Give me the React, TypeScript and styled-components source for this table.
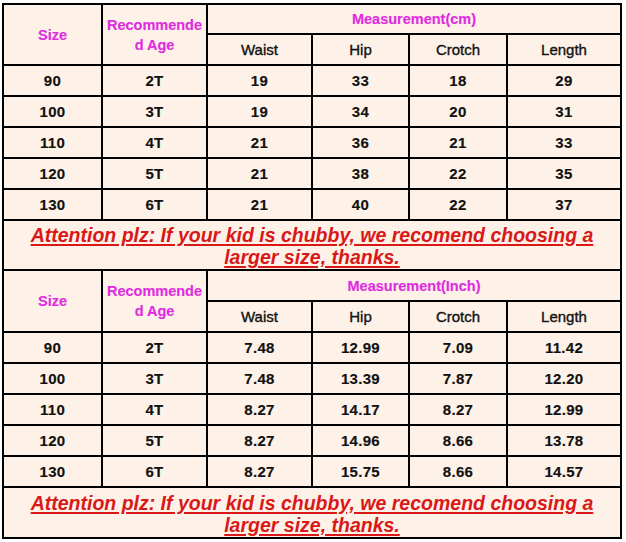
import styled, { createGlobalStyle } from 'styled-components'

const GlobalStyle = createGlobalStyle`
  html, body {
    margin: 0;
    padding: 0;
    background: #ffffff;
  }
`

const Page = styled.div`
  padding: 3px 0 0 2px;
`

// black background shows through the gaps as the cell borders
const Sheet = styled.div`
  display: grid;
  width: 620px;
  grid-template-columns: 97px 103px 103px 95px 96px 112px;
  grid-template-rows: 28px 29px repeat(5, 29px) 48px 29px 29px repeat(5, 29px) 49px;
  gap: 2px;
  padding: 2px;
  box-sizing: border-box;
  background: #000;
  font-family: "Liberation Sans", Arial, sans-serif;
`

const Cell = styled.div<{ $rows?: number; $cols?: number; $pink?: boolean; $light?: boolean }>`
  grid-row: span ${p => p.$rows ?? 1};
  grid-column: span ${p => p.$cols ?? 1};
  background: #fdf1e8;
  display: flex;
  align-items: center;
  justify-content: center;
  text-align: center;
  font-size: ${p => (p.$pink ? '14.5px' : '15px')};
  font-weight: ${p => (p.$light ? 400 : 700)};
  letter-spacing: ${p => (p.$pink || p.$light ? '0' : '0.3px')};
  -webkit-text-stroke: ${p => (p.$light ? '0.35px' : '0.15px')};
  line-height: 20px;
  color: ${p => (p.$pink ? '#e02ce0' : '#111')};
`

const Notice = styled.div`
  grid-column: span 6;
  background: #fdf1e8;
  display: flex;
  align-items: center;
  justify-content: center;
  text-align: center;
  padding-top: 2px;
  font-size: 19.5px;
  font-weight: 700;
  font-style: italic;
  line-height: 22px;
  color: #d91818;
  text-decoration: underline;
  text-decoration-thickness: 2px;
  text-underline-offset: 2px;
`

type Section = {
  unit: string
  rows: string[][]
}

const sections: Section[] = [
  {
    unit: 'Measurement(cm)',
    rows: [
      ['90', '2T', '19', '33', '18', '29'],
      ['100', '3T', '19', '34', '20', '31'],
      ['110', '4T', '21', '36', '21', '33'],
      ['120', '5T', '21', '38', '22', '35'],
      ['130', '6T', '21', '40', '22', '37'],
    ],
  },
  {
    unit: 'Measurement(Inch)',
    rows: [
      ['90', '2T', '7.48', '12.99', '7.09', '11.42'],
      ['100', '3T', '7.48', '13.39', '7.87', '12.20'],
      ['110', '4T', '8.27', '14.17', '8.27', '12.99'],
      ['120', '5T', '8.27', '14.96', '8.66', '13.78'],
      ['130', '6T', '8.27', '15.75', '8.66', '14.57'],
    ],
  },
]

const parts = ['Waist', 'Hip', 'Crotch', 'Length']

const App = () => (
  <Page>
    <GlobalStyle />
    <Sheet>
      {sections.map(section => (
        <>
          <Cell $rows={2} $pink>Size</Cell>
          <Cell $rows={2} $pink>Recommende<br />d Age</Cell>
          <Cell $cols={4} $pink>{section.unit}</Cell>
          {parts.map(part => (
            <Cell key={part} $light>{part}</Cell>
          ))}
          {section.rows.map(row =>
            row.map((value, i) => <Cell key={row[0] + i}>{value}</Cell>)
          )}
          <Notice>
            Attention plz: If your kid is chubby, we recomend choosing a<br />
            larger size, thanks.
          </Notice>
        </>
      ))}
    </Sheet>
  </Page>
)

export default App
